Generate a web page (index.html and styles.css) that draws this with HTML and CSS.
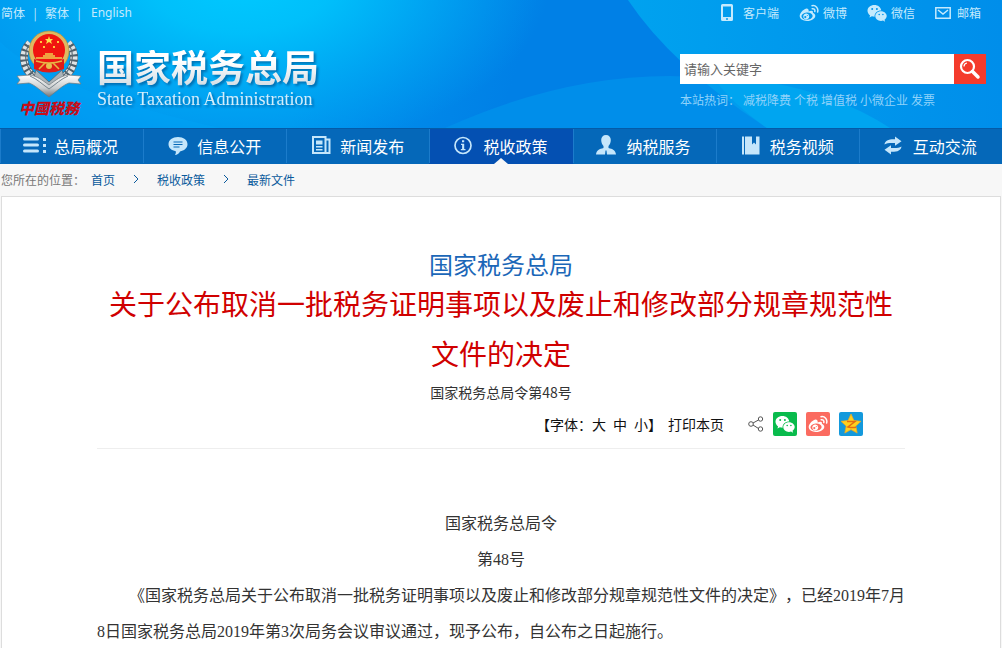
FILE: index.html
```html
<!DOCTYPE html>
<html lang="zh-CN">
<head>
    <meta charset="UTF-8">
    <meta name="viewport" content="width=device-width, initial-scale=1.0">
    <title>国家税务总局</title>
    <link rel="stylesheet" href="styles.css">
</head>
<body>

<svg class="symbols" aria-hidden="true">
    <symbol id="wechat" viewBox="0 0 20 18">
        <path fill="currentColor" fill-rule="evenodd" d="M7.5 1C3.4 1 .5 3.6.5 6.8c0 1.900 1 3.500 2.600 4.600L2.400 13.600l2.500-1.300c.9.300 1.700.4 2.700.4C7.200 8.900 10.300 6.400 14.300 6.400 13.700 3.200 11 1 7.500 1zM5.200 4a1 1 0 1 1 0 2 1 1 0 0 1 0-2zm4.700 0a1 1 0 1 1 0 2 1 1 0 0 1 0-2z"/>
        <path fill="currentColor" fill-rule="evenodd" d="M14 7.300c-3.300 0-5.700 2.200-5.700 4.800 0 2.700 2.500 4.800 5.700 4.800.7 0 1.400-.1 2-.3l2.100 1.100-.6-1.900c1.300-.9 2.200-2.200 2.200-3.700 0-2.600-2.500-4.800-5.700-4.800zM12.200 9.700a.8.800 0 1 1 0 1.600.8.800 0 0 1 0-1.600zm3.700 0a.8.800 0 1 1 0 1.600.8.800 0 0 1 0-1.600z"/>
    </symbol>
    <symbol id="weibo" viewBox="0 0 20 18">
        <path fill="currentColor" fill-rule="evenodd" d="M8 4.500C6.300 3.800 1 8 .7 11.600.4 15 4 17 8 17c5 0 8.300-2.700 8.300-5.300 0-1.500-1.200-2.400-2.400-2.700.6-1.900-.9-2.900-4.400-1.500.5-1.500 0-2.500-1.500-3zM7.700 8.500c3.200-.3 5.700 1.100 5.900 3.200.1 2-2.200 3.700-5.400 4-3.100.3-5.500-1-5.700-3.100-.1-2 2.100-3.800 5.200-4.100z"/>
        <path fill="currentColor" fill-rule="evenodd" d="M7.400 9.500a3 3 0 1 0 .6 5.900 3 3 0 0 0-.6-5.900zM6.300 12a1.100 1.100 0 1 1 0 2.200 1.100 1.100 0 0 1 0-2.200zm2-.9a.5.500 0 1 1 0 1 .5.500 0 0 1 0-1z"/>
        <path fill="none" stroke="currentColor" stroke-width="1.500" stroke-linecap="round" d="M13 1.700c3.800-.7 6.700 2.600 5.600 6.300M13.200 4.700c1.800-.3 3.100 1.100 2.600 2.800"/>
    </symbol>
</svg>

<header class="header">
    <svg class="header-bg" viewBox="0 0 1002 128" preserveAspectRatio="none" aria-hidden="true">
        <defs>
            <linearGradient id="sky" gradientUnits="userSpaceOnUse" x1="330" y1="0" x2="520" y2="60">
                <stop offset="0" stop-color="#0094ee"/>
                <stop offset="1" stop-color="#0080e6"/>
            </linearGradient>
            <radialGradient id="glow" gradientUnits="userSpaceOnUse" cx="0" cy="0" r="1" gradientTransform="translate(240 -20) scale(310 175)">
                <stop offset="0" stop-color="#00caff"/>
                <stop offset="0.300" stop-color="#00c4fc" stop-opacity="0.900"/>
                <stop offset="1" stop-color="#00b4f6" stop-opacity="0"/>
            </radialGradient>
            <linearGradient id="band" x1="0" y1="0" x2="1" y2="0">
                <stop offset="0" stop-color="#00a2ef"/>
                <stop offset="1" stop-color="#008eea"/>
            </linearGradient>
        </defs>
        <rect width="1002" height="128" fill="url(#sky)"/>
        <rect width="1002" height="128" fill="url(#glow)"/>
        <path d="M0 42Q50 90 220 128H0z" fill="#00a4f8" opacity="0.300"/>
        <path d="M445 128Q560 76 670 76Q830 80 900 128z" fill="#008eea"/>
        <path d="M628 0Q672 66 767 128H1002V0z" fill="url(#band)"/>
        <path d="M712 76Q732 104 767 128H890Q820 82 712 76z" fill="#00a5f0"/>
    </svg>

    <div class="topbar">
        <nav class="langs">
            <a href="#">简体</a><span class="bar">|</span><a href="#">繁体</a><span class="bar">|</span><a href="#">English</a>
        </nav>
        <nav class="tools">
            <a href="#"><svg width="12" height="18" viewBox="0 0 12 18"><path fill="currentColor" fill-rule="evenodd" d="M1.500 0h9Q12 0 12 1.500v14q0 1.500-1.500 1.500h-9Q0 17 0 15.500v-14Q0 0 1.500 0zM2 2.500v10.500h8V2.500zM5 14.300v1.400h2v-1.400z"/></svg><span class="wide">客户端</span></a>
            <a href="#"><svg width="20" height="18"><use href="#weibo"/></svg><span>微博</span></a>
            <a href="#"><svg width="20" height="18"><use href="#wechat"/></svg><span>微信</span></a>
            <a href="#"><svg width="16" height="12" viewBox="0 0 16 12"><path fill="none" stroke="currentColor" stroke-width="1.500" d="M.8.8h14.400v10.400H.8zM3 3l5 4 5-4"/></svg><span class="mail">邮箱</span></a>
        </nav>
    </div>

    <div class="banner">
        <a class="brand" href="#">
            <span class="emblem">
                <svg width="66" height="68" viewBox="0 0 66 68" aria-hidden="true">
                    <defs>
                        <linearGradient id="silver" x1="0" y1="0" x2="0" y2="1">
                            <stop offset="0" stop-color="#ffffff"/>
                            <stop offset="0.600" stop-color="#c9cccd"/>
                            <stop offset="1" stop-color="#6d7478"/>
                        </linearGradient>
                    </defs>
                    <path d="M14 13C5 22 6 38 18 47M52 13C61 22 60 38 48 47" fill="none" stroke="#4f5f69" stroke-width="8"/>
                    <path d="M14 13C5 22 6 38 18 47M52 13C61 22 60 38 48 47" fill="none" stroke="#dfe3e4" stroke-width="7" stroke-dasharray="3 2"/>
                    <path d="M13 15c-6 9-4 22 6 31M53 15c6 9 4 22-6 31" fill="none" stroke="#5c6a73" stroke-width="1.200"/>
                    <path d="M20 40l13 12 13-12 2 7-15 9-15-9z" fill="#aab3b8" stroke="#596770" stroke-width="0.800"/>
                    <path d="M1 46l13-1c7 1 12 5 19 10 7-5 12-9 19-10l13 1-3 4 3 4-12-1c-6 2-12 8-20 14-8-6-14-12-20-14L1 54l3-4z" fill="url(#silver)" stroke="#70787c" stroke-width="0.700"/>
                    <path d="M14 46c7 3 12 8 19 13 7-5 12-10 19-13" fill="none" stroke="#78858e" stroke-width="1"/>
                    <circle cx="33" cy="21" r="20" fill="#dfb960" stroke="#b8903a" stroke-width="0.700"/>
                    <circle cx="33" cy="20" r="16" fill="#f01410"/>
                    <path d="M18 29q15 6 30 0v10q-15 7-30 0z" fill="#e01c16"/>
                    <path d="M20 31q13 4 26 0M23 39l6-6h8l6 6" fill="none" stroke="#e7b646" stroke-width="1.500"/>
                    <circle cx="33" cy="36" r="3" fill="#e8bd4f"/>
                    <path d="M27 27v-2h2v-2h8v2h2v2zM20 27h26v2H20z" fill="#f0a040"/>
                    <path d="M33 6l1 3h3l-2 2 1 3-3-2-3 2 1-3-2-2h3z" fill="#ffe14d"/>
                    <path d="M24 11h2v2h-2zM41 11h2v2h-2zM27 16h2v2h-2zM37 16h2v2h-2z" fill="#ffc840"/>
                </svg>
                <b class="seal">中國税務</b>
            </span>
            <span class="brand-text">
                <strong>国家税务总局</strong>
                <em>State Taxation Administration</em>
            </span>
        </a>

        <div class="search">
            <form class="search-form">
                <input type="text" aria-label="请输入关键字" placeholder="请输入关键字">
                <button type="button" aria-label="搜索">
                    <svg width="22" height="22" viewBox="0 0 22 22"><circle cx="8.500" cy="8.500" r="6.500" fill="none" stroke="#fff" stroke-width="2.200"/><path d="M5 8.500A3.500 3.500 0 0 1 8 5" fill="none" stroke="#fff" stroke-width="1.200"/><path d="M13.500 13.500l5.500 5.500" stroke="#fff" stroke-width="3.500" stroke-linecap="round"/></svg>
                </button>
            </form>
            <p class="hot">
                <span>本站热词：</span>
                <a href="#">减税降费</a>
                <a href="#">个税</a>
                <a href="#">增值税</a>
                <a href="#">小微企业</a>
                <a href="#">发票</a>
            </p>
        </div>
    </div>
</header>

<nav class="menu">
    <a href="#"><svg width="24" height="22" viewBox="0 0 24 22"><path d="M2.500 4h13M2.500 10h13M2.500 16h13" stroke="currentColor" stroke-width="3" stroke-linecap="round"/><path d="M21 3h3v3h-3zM21 9h3v3h-3zM21 15h3v3h-3z" fill="currentColor"/></svg>总局概况</a>
    <a href="#"><svg width="24" height="22" viewBox="0 0 24 22"><path d="M13 2c5.500 0 9.500 3 9.500 7.300 0 4-3.500 6.500-7.500 7.200-1 2-3 3.500-5 3.500.8-1.200 1-2.300.8-3.700C6.500 15.500 3.500 13 3.500 9.300 3.500 5 7.500 2 13 2z" fill="currentColor"/><path d="M8.500 7h9M8.500 9.500h9M8.500 12h6" stroke="#0668b8" stroke-width="1.200"/></svg>信息公开</a>
    <a href="#"><svg width="24" height="22" viewBox="0 0 24 22"><path d="M5 2h12.500v16H5zM17.500 4.500H21.500V18h-5" fill="none" stroke="currentColor" stroke-width="2"/><path d="M8 5.500h6.500v4H8zM8 11h6.500v1.500H8zM8 14h6.500v1.500H8z" fill="currentColor"/></svg>新闻发布</a>
    <a href="#" class="active"><svg width="24" height="22" viewBox="0 0 24 22"><circle cx="12" cy="10.500" r="8" fill="none" stroke="currentColor" stroke-width="1.700"/><path d="M11 5.300h2.200v2H11zM10 8.800h3.200v5.200h1.300v1.200H9.800V14h1.300v-4H10z" fill="currentColor"/></svg>税收政策</a>
    <a href="#"><svg width="24" height="22" viewBox="0 0 24 22"><path d="M11 0c3 0 4.800 2 4.800 5 0 3-1.300 5-2.300 6v2c4 1 7 2 7.500 6.500H12l-.5-4h-1l-.5 4H1c.5-4.500 3.500-5.500 7.500-6.500v-2c-1-1-2.300-3-2.300-6C6.200 2 8 0 11 0z" fill="currentColor"/></svg>纳税服务</a>
    <a href="#"><svg width="24" height="22" viewBox="0 0 24 22"><path d="M4 1.500h2v18H4zM7 1.500h7v8l2-2 2 2v-8h3.500v18H7z" fill="currentColor"/></svg>税务视频</a>
    <a href="#"><svg width="24" height="22" viewBox="0 0 24 22"><path d="M3.500 9.500C4 5.500 7.500 4 14 4.200V1.500l6.500 4.700-6.500 4.500V8C9 7.700 6 8 3.500 9.500zM20.500 11.500c-.5 4-4 5.500-10.500 5.300v2.700l-6.500-4.700 6.500-4.500V13c5 .3 8 0 10.500-1.500z" fill="currentColor"/></svg>互动交流</a>
</nav>

<nav class="crumbs">
    <span>您所在的位置：</span>
    <a href="#">首页</a>
    <svg width="6" height="10" viewBox="0 0 6 10"><path d="M1 1l4 4-4 4"/></svg>
    <a href="#">税收政策</a>
    <svg width="6" height="10" viewBox="0 0 6 10"><path d="M1 1l4 4-4 4"/></svg>
    <a href="#">最新文件</a>
</nav>

<main class="article">
    <p class="source">国家税务总局</p>
    <h1>关于公布取消一批税务证明事项以及废止和修改部分规章规范性文件的决定</h1>
    <p class="number">国家税务总局令第48号</p>

    <div class="actions">
        <span class="fontsize">【字体：<a href="#">大</a><a href="#">中</a><a href="#">小</a>】</span>
        <a href="#" class="print">打印本页</a>
        <div class="share">
            <svg width="16" height="16" viewBox="0 0 16 16"><path d="M5 7l5.500-3M5 9l5.500 3.500" stroke="#555" fill="none"/><circle cx="3" cy="8" r="2.300" stroke="#555" fill="none"/><circle cx="12.500" cy="3" r="2.200" stroke="#555" fill="none"/><circle cx="12.500" cy="13" r="2.200" stroke="#555" fill="none"/></svg>
            <a href="#" class="wechat" aria-label="微信"><svg width="20" height="18"><use href="#wechat"/></svg></a>
            <a href="#" class="weibo" aria-label="微博"><svg width="20" height="18"><use href="#weibo"/></svg></a>
            <a href="#" class="qzone" aria-label="QQ空间"><svg width="24" height="24" viewBox="0 0 24 24"><path d="M12 2l3 6.500 7 .8-5.200 4.800 1.400 7L12 17.600 5.800 21.100l1.400-7L2 9.300l7-.8z" fill="#ffd01e" stroke="#f6a81c" stroke-width="0.700" stroke-linejoin="round"/><path d="M8 9.500h8l-7 5.500q4 1 8 .3" fill="none" stroke="#e56b12" stroke-width="1.500"/></svg></a>
        </div>
    </div>

    <div class="content">
        <p class="center">国家税务总局令</p>
        <p class="center">第48号</p>
        <p>《国家税务总局关于公布取消一批税务证明事项以及废止和修改部分规章规范性文件的决定》，已经2019年7月8日国家税务总局2019年第3次局务会议审议通过，现予公布，自公布之日起施行。</p>
    </div>
</main>

</body>
</html>
```
FILE: styles.css
```css
* {
    box-sizing: border-box;
}
body {
    margin: 0;
    background: #f7f7f7;
    font-family: "Noto Sans CJK SC", sans-serif;
    font-size: 12px;
    color: #333;
    text-spacing-trim: space-all;
}
a {
    color: inherit;
    text-decoration: none;
}
p, h1 {
    margin: 0;
}
svg {
    flex: none;
}
.symbols {
    display: none;
}

/* header */
.header {
    position: relative;
    height: 128px;
    color: #c4eafd;
}
.header-bg {
    position: absolute;
    left: 0;
    top: 0;
    width: 100%;
    height: 100%;
}
.topbar {
    position: relative;
    display: flex;
    justify-content: space-between;
    height: 26px;
    line-height: 26px;
    padding: 0 21px 0 1px;
}
.langs {
    display: flex;
}
.langs a:last-child {
    font-family: "Noto Sans", sans-serif;
    margin-left: 2px;
}
.bar {
    width: 20px;
    text-align: center;
}
.tools {
    display: flex;
    gap: 20px;
}
.tools a {
    display: flex;
    align-items: center;
    gap: 4px;
}
.tools .wide {
    margin-left: 6px;
}
.tools .mail {
    margin-left: 2px;
}
.banner {
    position: relative;
    display: flex;
    justify-content: space-between;
    padding: 4px 16px 0 16px;
}
.brand {
    display: flex;
    gap: 15px;
}
.emblem {
    display: flex;
    flex-direction: column;
    align-items: center;
}
.seal {
    color: #c80d18;
    font-family: "Noto Sans CJK TC", sans-serif;
    font-size: 15px;
    font-weight: 900;
    font-style: italic;
    line-height: 20px;
}
.brand-text {
    display: flex;
    flex-direction: column;
    padding-top: 20px;
    filter: drop-shadow(2px 2px 1px rgba(0, 60, 120, 0.5));
}
.brand-text strong {
    font-family: "Liberation Sans", "Noto Sans CJK SC", sans-serif;
    font-size: 37px;
    line-height: 40px;
    background: linear-gradient(#fff 30%, #ccd8e0);
    -webkit-background-clip: text;
    background-clip: text;
    color: transparent;
}
.brand-text em {
    font-family: "Liberation Serif", serif;
    font-size: 18px;
    font-style: normal;
    line-height: 18px;
    color: #d4eefb;
}
.search {
    width: 306px;
    padding-top: 24px;
}
.search-form {
    display: flex;
    height: 30px;
}
.search-form input {
    flex: 1;
    min-width: 0;
    border: 0;
    padding: 0 4px 2px;
    background: #fff;
    font-family: inherit;
    font-size: 13px;
    outline: none;
}
.search-form input::placeholder {
    color: #666;
}
.search-form button {
    display: flex;
    align-items: center;
    justify-content: center;
    width: 32px;
    padding: 0;
    border: 0;
    background: #f43b2c;
    cursor: pointer;
}
.hot {
    display: flex;
    gap: 3px;
    line-height: 32px;
    color: #8fd2fa;
}

/* main menu */
.menu {
    display: flex;
    height: 36px;
    padding-bottom: 1px;
    background: #0568b9;
    border-top: 1px solid #045ba8;
}
.menu a {
    position: relative;
    flex: 1;
    display: flex;
    align-items: center;
    gap: 8px;
    padding-left: 21px;
    border-left: 1px solid #1c7ccb;
    font-size: 16px;
    line-height: 34px;
    color: #fff;
}
.menu svg {
    color: #c5e6fb;
}
.menu .active {
    background: #0450b2;
    box-shadow: 0 1px #0450b2;
}
.menu .active::after {
    content: "";
    position: absolute;
    left: 50%;
    bottom: -1px;
    margin-left: -7px;
    border: 7px solid transparent;
    border-top: 0;
    border-bottom: 6px solid #f7f7f7;
}

/* breadcrumb */
.crumbs {
    display: flex;
    align-items: center;
    height: 32px;
    padding-left: 1px;
    padding-bottom: 2px;
    color: #777;
}
.crumbs a {
    color: #0a5a9c;
}
.crumbs span {
    margin-right: 6px;
}
.crumbs svg {
    margin: 0 18px;
    fill: none;
    stroke: #0a5a9c;
}

/* article */
.article {
    margin: 0 1px;
    padding: 47px 95px 0;
    border: 1px solid #ddd;
    border-bottom: 0;
    background: #fff;
}
.source {
    font-size: 24px;
    line-height: 40px;
    text-align: center;
    color: #1b67b8;
}
.article h1 {
    font-size: 28px;
    font-weight: normal;
    line-height: 50px;
    text-align: center;
    color: #d00000;
    margin-top: -6px;
}
.number {
    font-size: 14px;
    line-height: 28px;
    text-align: center;
}
.actions {
    display: flex;
    justify-content: flex-end;
    align-items: center;
    height: 43px;
    padding-right: 42px;
    padding-bottom: 6px;
    border-bottom: 1px solid #eee;
    font-size: 14px;
    color: #111;
}
.fontsize a {
    margin-right: 7px;
}
.fontsize a:last-child {
    margin-right: 0;
}
.print {
    margin-left: 6px;
}
.share {
    display: flex;
    align-items: center;
    gap: 9px;
    margin-left: 24px;
}
.share a {
    display: flex;
    align-items: center;
    justify-content: center;
    width: 24px;
    height: 24px;
    border-radius: 2px;
    color: #fff;
}
.wechat {
    background: #09bb4c;
}
.weibo {
    background: #fb6b60;
}
.qzone {
    background: #1399dc;
}
.content {
    padding-top: 57px;
    font-family: "Liberation Serif", "Noto Sans CJK SC", serif;
    font-size: 16px;
    line-height: 36px;
}
.content p {
    text-indent: 2em;
}
.content .center {
    text-align: center;
    text-indent: 0;
}
```
